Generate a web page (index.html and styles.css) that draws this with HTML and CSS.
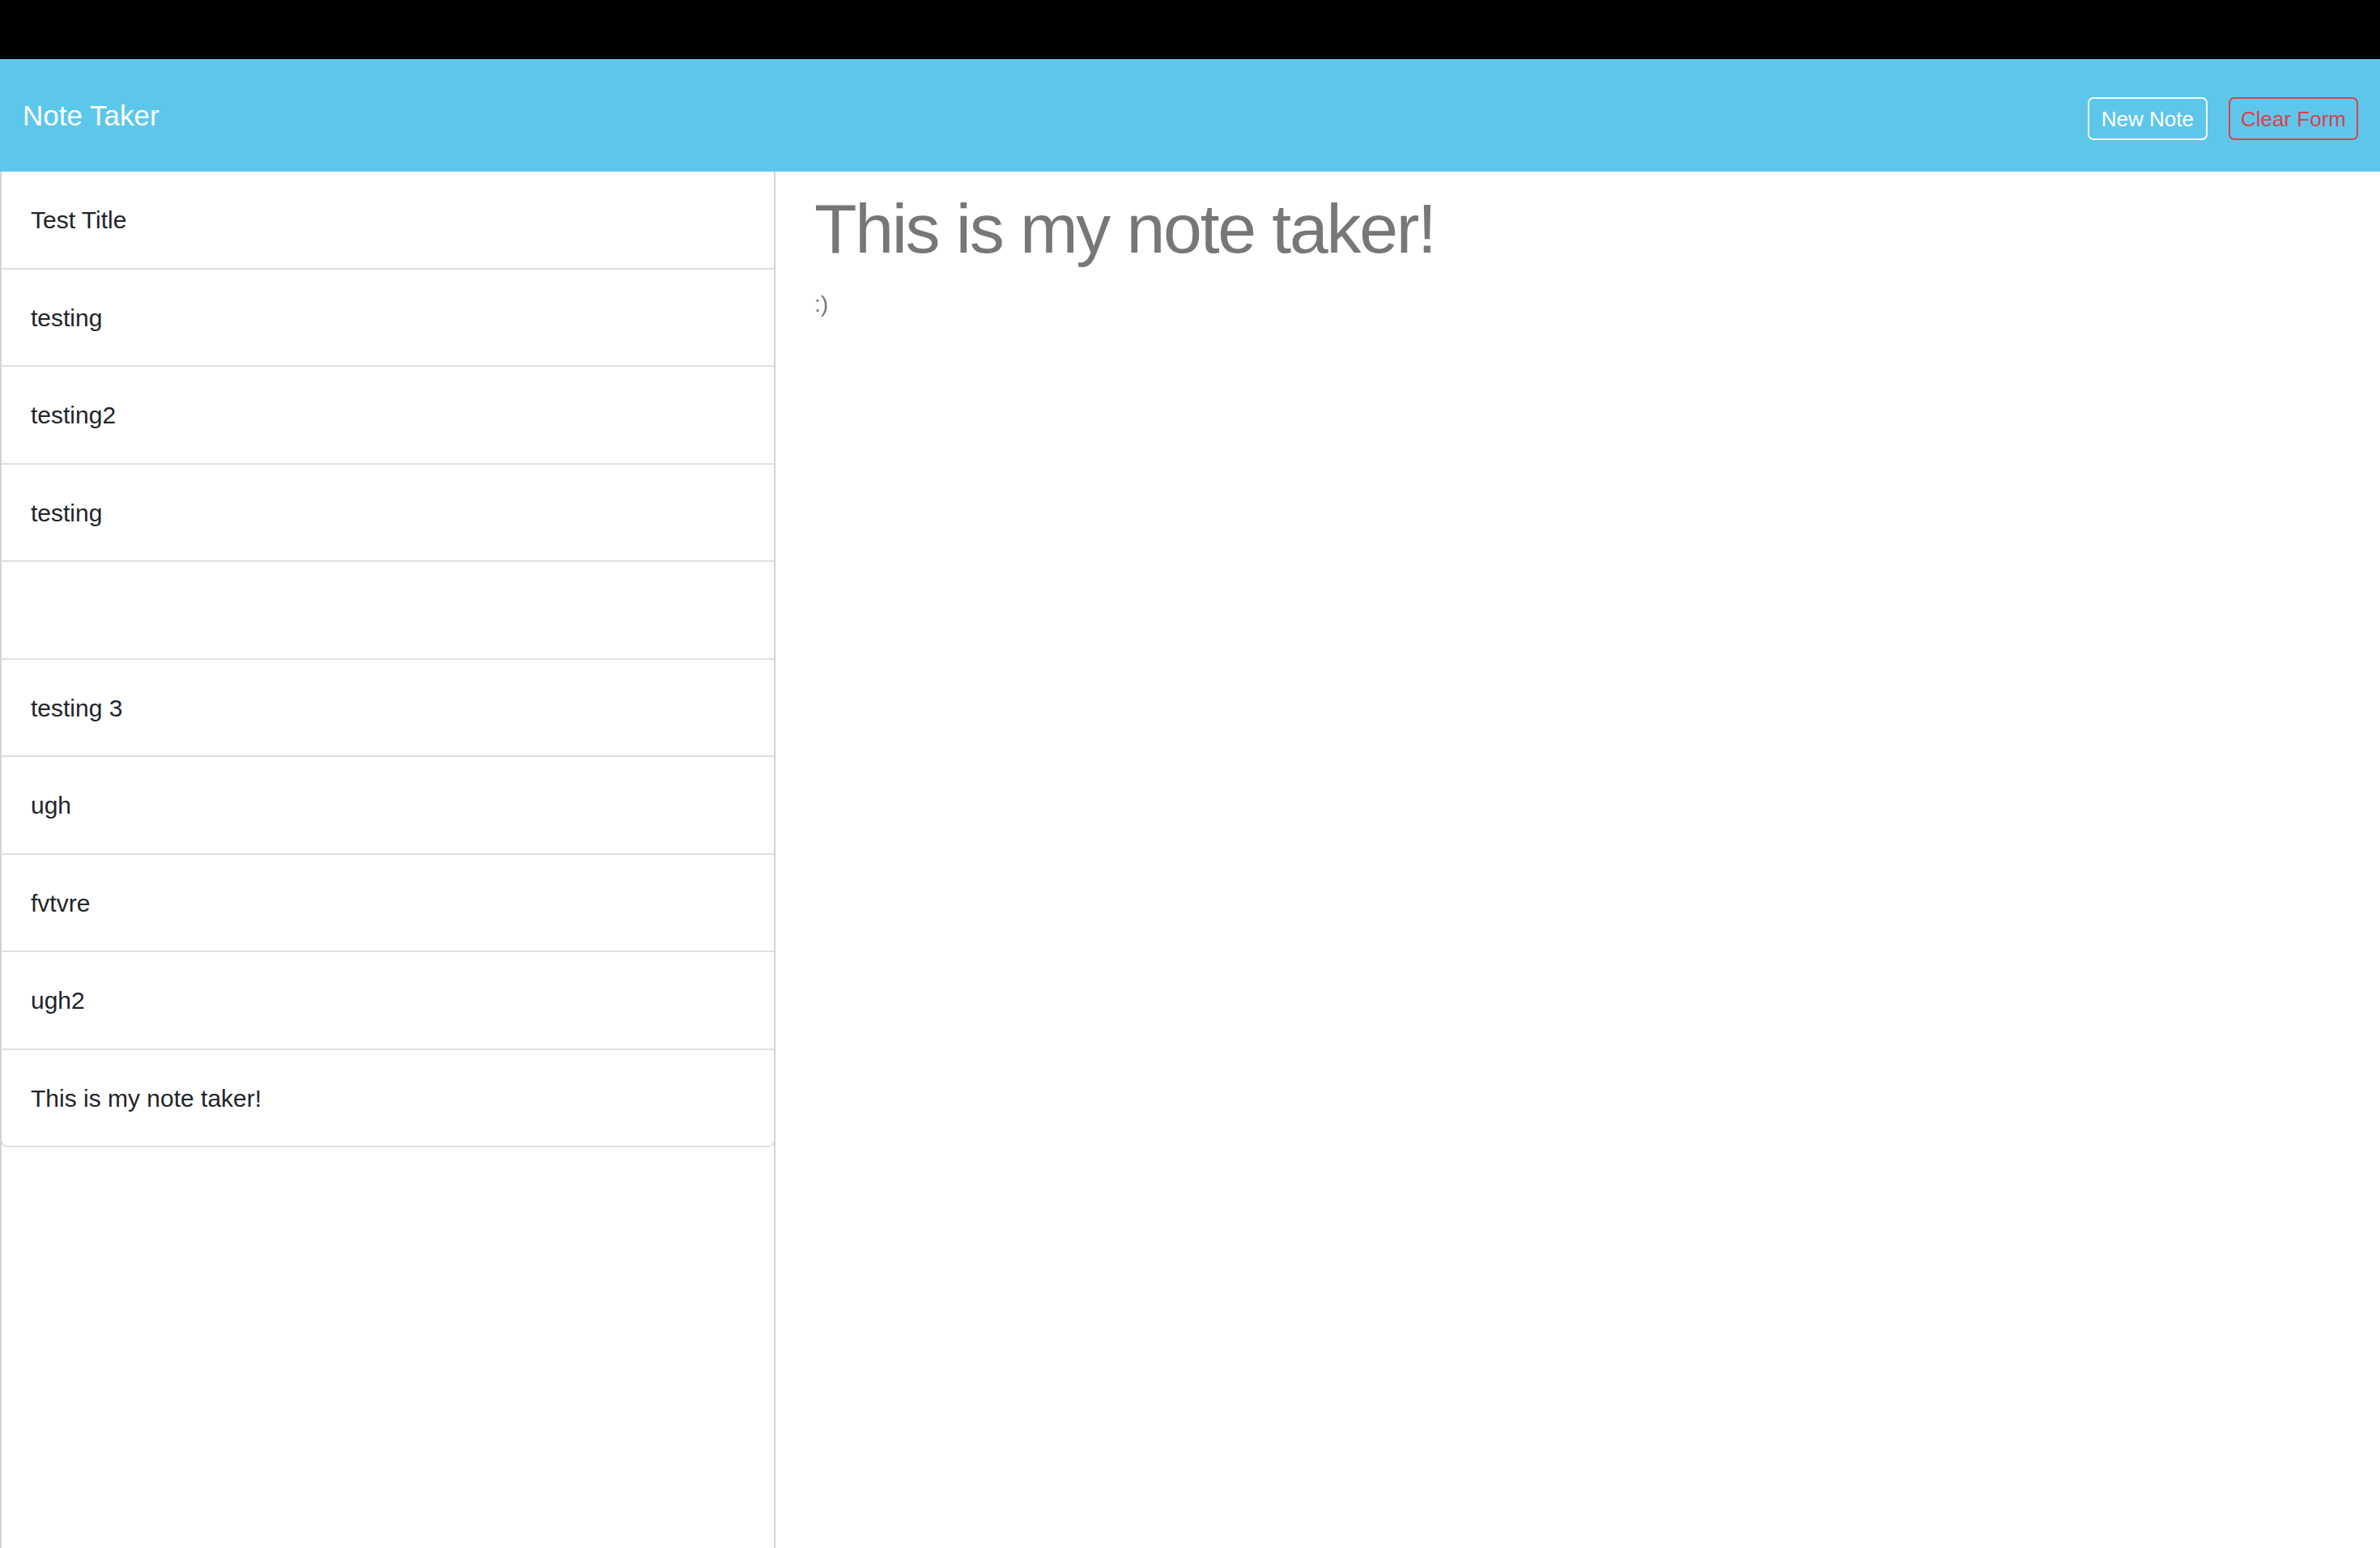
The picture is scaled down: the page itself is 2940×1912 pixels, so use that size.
FILE: index.html
```html
<!DOCTYPE html>
<html lang="en">
<head>
<meta charset="utf-8">
<title>Note Taker</title>
<link rel="stylesheet" href="styles.css">
</head>
<body>
<div class="topbar"></div>
<header class="navbar">
  <div class="brand">Note Taker</div>
  <div class="actions">
    <button class="btn btn-light">New Note</button>
    <button class="btn btn-danger">Clear Form</button>
  </div>
</header>
<main class="content">
  <aside class="sidebar">
    <ul class="list-group">
      <li class="list-item">Test Title</li>
      <li class="list-item">testing</li>
      <li class="list-item">testing2</li>
      <li class="list-item">testing</li>
      <li class="list-item"></li>
      <li class="list-item">testing 3</li>
      <li class="list-item">ugh</li>
      <li class="list-item">fvtvre</li>
      <li class="list-item">ugh2</li>
      <li class="list-item">This is my note taker!</li>
    </ul>
  </aside>
  <section class="note">
    <div class="note-title">This is my note taker!</div>
    <div class="note-text">:)</div>
  </section>
</main>
</body>
</html>
```
FILE: styles.css
```css
* { box-sizing: border-box; }
html, body {
  margin: 0;
  padding: 0;
  background: #ffffff;
  font-family: "Liberation Sans", Arial, sans-serif;
}
.topbar {
  height: 73px;
  background: #000000;
}
.navbar {
  height: 139px;
  background: #5dc7eb;
  display: flex;
  align-items: center;
  padding: 0 27px 0 28px;
}
.brand {
  color: #ffffff;
  font-size: 35px;
  line-height: 1;
}
.actions {
  margin-left: auto;
  display: flex;
  gap: 26px;
  margin-top: 8px;
}
.btn {
  font-family: "Liberation Sans", Arial, sans-serif;
  font-size: 26px;
  height: 53px;
  padding: 0 15px;
  background: transparent;
  border-radius: 7px;
  line-height: 1;
  white-space: nowrap;
  cursor: pointer;
}
.btn-light {
  color: #ffffff;
  border: 2px solid #f4fbfe;
}
.btn-danger {
  color: #d6434d;
  border: 2px solid #d6434d;
  padding: 0 13px;
}
.content {
  display: flex;
  height: 1700px;
}
.sidebar {
  width: 958px;
  flex: none;
  border-left: 2px solid #d3d3d3;
  border-right: 2px solid #d3d3d3;
}
.list-group {
  list-style: none;
  margin: 0 -2px;
  padding: 0;
  border-left: 2px solid #d3d3d3;
  border-right: 2px solid #d3d3d3;
  border-bottom: 2px solid #e0e0e0;
  border-radius: 0 0 9px 9px;
}
.list-item {
  height: 120.5px;
  display: flex;
  align-items: center;
  padding: 2px 36px 0;
  font-size: 30px;
  color: #212529;
  border-bottom: 2px solid #e0e0e0;
}
.list-item:last-child {
  border-bottom: none;
  height: 118.5px;
}
.note {
  flex: 1;
  padding: 19px 48px 0 48px;
  color: #777777;
}
.note-title {
  font-size: 86px;
  line-height: 103px;
  letter-spacing: -2.3px;
}
.note-text {
  font-size: 28px;
  line-height: 42px;
  margin-top: 21px;
}
```
